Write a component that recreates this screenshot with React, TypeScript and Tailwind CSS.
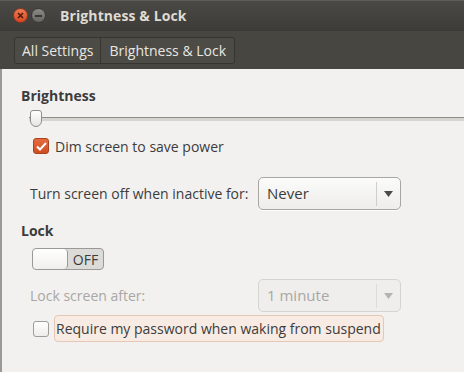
import React from "react";

function Combo({ value, disabled }: { value: string; disabled?: boolean }) {
  return (
    <div
      className={`w-[143px] h-[33px] rounded-[5px] border flex items-center ${
        disabled
          ? "border-[#d6d4d1] bg-[#efeeec] text-[#a9a7a3]"
          : "border-[#a8a6a2] bg-gradient-to-b from-[#fbfbfa] to-[#eeedeb] text-[#3c3c3c] shadow-[0_1px_0_rgba(255,255,255,0.8)]"
      }`}
    >
      <span className="flex-1 pl-[8px] text-[15px]">{value}</span>
      <span
        className={`w-px h-[24px] ${disabled ? "bg-[#dddbd8]" : "bg-[#d0cecb]"}`}
      />
      <span className="w-[23px] flex justify-center">
        <svg width="9" height="6" viewBox="0 0 9 6">
          <path d="M0 0h9L4.5 6z" fill={disabled ? "#b5b3af" : "#4a4a48"} />
        </svg>
      </span>
    </div>
  );
}

export default function App() {
  return (
    <div
      className="w-[464px] h-[372px] overflow-hidden flex flex-col bg-[#f2f1f0] text-[#3c3c3c]"
      style={{ fontFamily: '"Open Sans", "Noto Sans", sans-serif' }}
    >
      {/* title bar */}
      <div className="h-[30px] flex items-center bg-gradient-to-b from-[#4a4945] to-[#3d3c38] border-t border-[#5e5d59]">
        <div className="ml-[13px] w-[15px] h-[15px] rounded-full bg-gradient-to-b from-[#f37a52] to-[#d9461f] flex items-center justify-center border border-[#8a3a20]">
          <svg width="7" height="7" viewBox="0 0 7 7">
            <path d="M1 1l5 5M6 1L1 6" stroke="#4a1d0e" strokeWidth="1.6" />
          </svg>
        </div>
        <div className="ml-[3px] w-[15px] h-[15px] rounded-full bg-gradient-to-b from-[#8a8984] to-[#66655f] flex items-center justify-center border border-[#3b3a36]">
          <div className="w-[7px] h-[2px] bg-[#3a3935]" />
        </div>
        <span className="ml-[14px] text-[14px] font-bold text-[#dfdbd2] tracking-[0.1px]">
          Brightness &amp; Lock
        </span>
      </div>

      {/* toolbar */}
      <div className="h-[39px] flex items-center bg-[#474641] border-t border-[#3a3935] pl-[14px]">
        <div className="flex h-[27px] rounded-[3px] border border-[#36352f] bg-[#4c4b46] text-[#e8e6e1] text-[14px]">
          <div className="px-[7px] flex items-center border-r border-[#36352f]">All Settings</div>
          <div className="px-[8px] flex items-center">Brightness &amp; Lock</div>
        </div>
      </div>

      {/* content */}
      <div className="flex-1 border-l-[2px] border-[#9a9995] pl-[19px] pt-[17px] text-[14px]">
        <div className="font-bold h-[20px] leading-[20px]">Brightness</div>

        {/* slider */}
        <div className="relative h-[20px] mt-[3px] ml-[8px]">
          <div className="absolute left-0 right-0 top-[8px] h-[4px] bg-[#d6d5d2] border-t border-[#8e8d8a]" />
          <div className="absolute left-[1px] top-[1px] w-[12px] h-[17px] rounded-b-[6px] rounded-t-[3px] border border-[#8e8d8a] bg-gradient-to-b from-white to-[#e6e5e3]" />
        </div>

        <div className="flex items-center mt-[7px] ml-[12px] h-[20px]">
          <div className="w-[16px] h-[16px] rounded-[3px] bg-gradient-to-b from-[#e66a3e] to-[#cf4d22] border border-[#a7441f] flex items-center justify-center">
            <svg width="11" height="9" viewBox="0 0 11 9">
              <path d="M1 4.5l3 3L10 1" stroke="#fff" strokeWidth="2" fill="none" />
            </svg>
          </div>
          <span className="ml-[6px]">Dim screen to save power</span>
        </div>

        <div className="flex items-center mt-[21px] ml-[9px] h-[33px]">
          <span className="w-[228px]">Turn screen off when inactive for:</span>
          <Combo value="Never" />
        </div>

        <div className="font-bold mt-[11px] h-[20px] leading-[20px]">Lock</div>

        <div className="mt-[7px] ml-[11px] w-[72px] h-[22px] rounded-[4px] border border-[#9a9995] bg-[#dcdbd8] flex">
          <div className="w-[35px] h-full rounded-[4px] border-r border-[#9a9995] bg-gradient-to-b from-white to-[#f0efed]" />
          <span className="flex-1 flex items-center justify-center text-[14px] text-[#3c3c3c]">OFF</span>
        </div>

        <div className="flex items-center mt-[9px] ml-[9px] h-[33px] text-[#a9a7a3]">
          <span className="w-[228px]">Lock screen after:</span>
          <Combo value="1 minute" disabled />
        </div>

        <div className="flex items-center mt-[3px] ml-[12px] h-[27px]">
          <div className="w-[16px] h-[16px] rounded-[3px] border border-[#9f9d99] bg-gradient-to-b from-white to-[#eeedeb]" />
          <span className="ml-[5px] h-[27px] px-[1px] flex items-center rounded-[4px] border border-[#e6c6b5] bg-[#f7ebe3] pr-[2px]">
            Require my password when waking from suspend
          </span>
        </div>
      </div>
    </div>
  );
}
